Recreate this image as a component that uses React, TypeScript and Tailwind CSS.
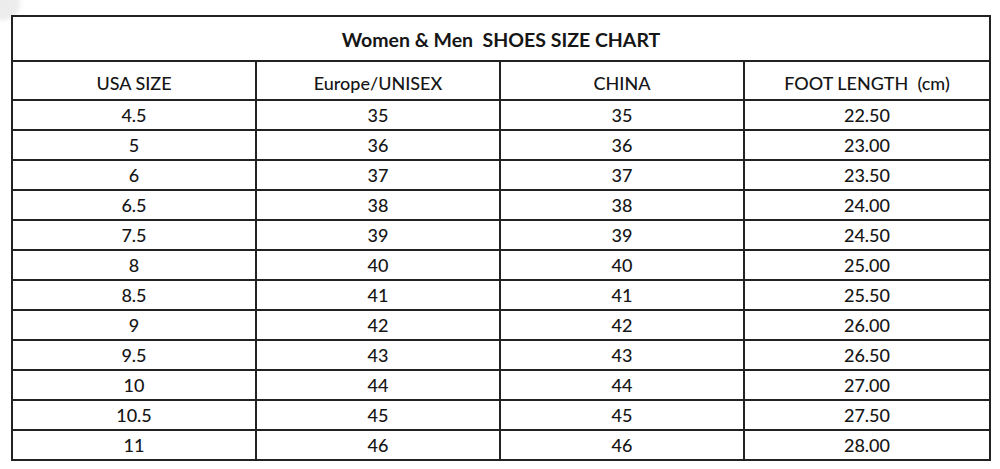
const headers = ["USA SIZE", "Europe/UNISEX", "CHINA", "FOOT LENGTH\u00a0 (cm)"];

const rows = [
  ["4.5", "35", "35", "22.50"],
  ["5", "36", "36", "23.00"],
  ["6", "37", "37", "23.50"],
  ["6.5", "38", "38", "24.00"],
  ["7.5", "39", "39", "24.50"],
  ["8", "40", "40", "25.00"],
  ["8.5", "41", "41", "25.50"],
  ["9", "42", "42", "26.00"],
  ["9.5", "43", "43", "26.50"],
  ["10", "44", "44", "27.00"],
  ["10.5", "45", "45", "27.50"],
  ["11", "46", "46", "28.00"],
];

export default function App() {
  return (
    <div
      className="relative h-[469px] w-[1000px] overflow-hidden bg-white pl-[11px] pt-[15px] text-[#161616]"
      style={{ fontFamily: "Lato, 'Open Sans', sans-serif" }}
    >
      {/* faint watermark corner */}
      <div className="absolute -left-[14px] -top-[14px] h-[34px] w-[34px] rounded-full bg-[#ececec] blur-[2px]" />

      <div className="relative w-[980px] border-2 border-[#222] bg-white">
        <div className="flex h-[45px] items-center justify-center border-b-2 border-[#222] pt-[3px] text-[19.5px] font-bold">
          Women &amp; Men&nbsp; SHOES SIZE CHART
        </div>

        <div className="grid grid-cols-4 font-medium">
          {headers.map((h, i) => (
            <div
              key={h}
              className={`flex h-[39px] items-center justify-center border-b-2 border-[#222] pt-[5px] text-[18px] ${
                i < 3 ? "border-r-2" : ""
              }`}
            >
              {h}
            </div>
          ))}

          {rows.map((row, r) =>
            row.map((cell, c) => (
              <div
                key={`${r}-${c}`}
                className={`flex items-center justify-center border-[#222] pt-[1px] text-[18px] ${
                  r < rows.length - 1 ? "h-[30px] border-b-2" : "h-[28px]"
                } ${c < 3 ? "border-r-2" : ""}`}
              >
                {cell}
              </div>
            ))
          )}
        </div>
      </div>
    </div>
  );
}
